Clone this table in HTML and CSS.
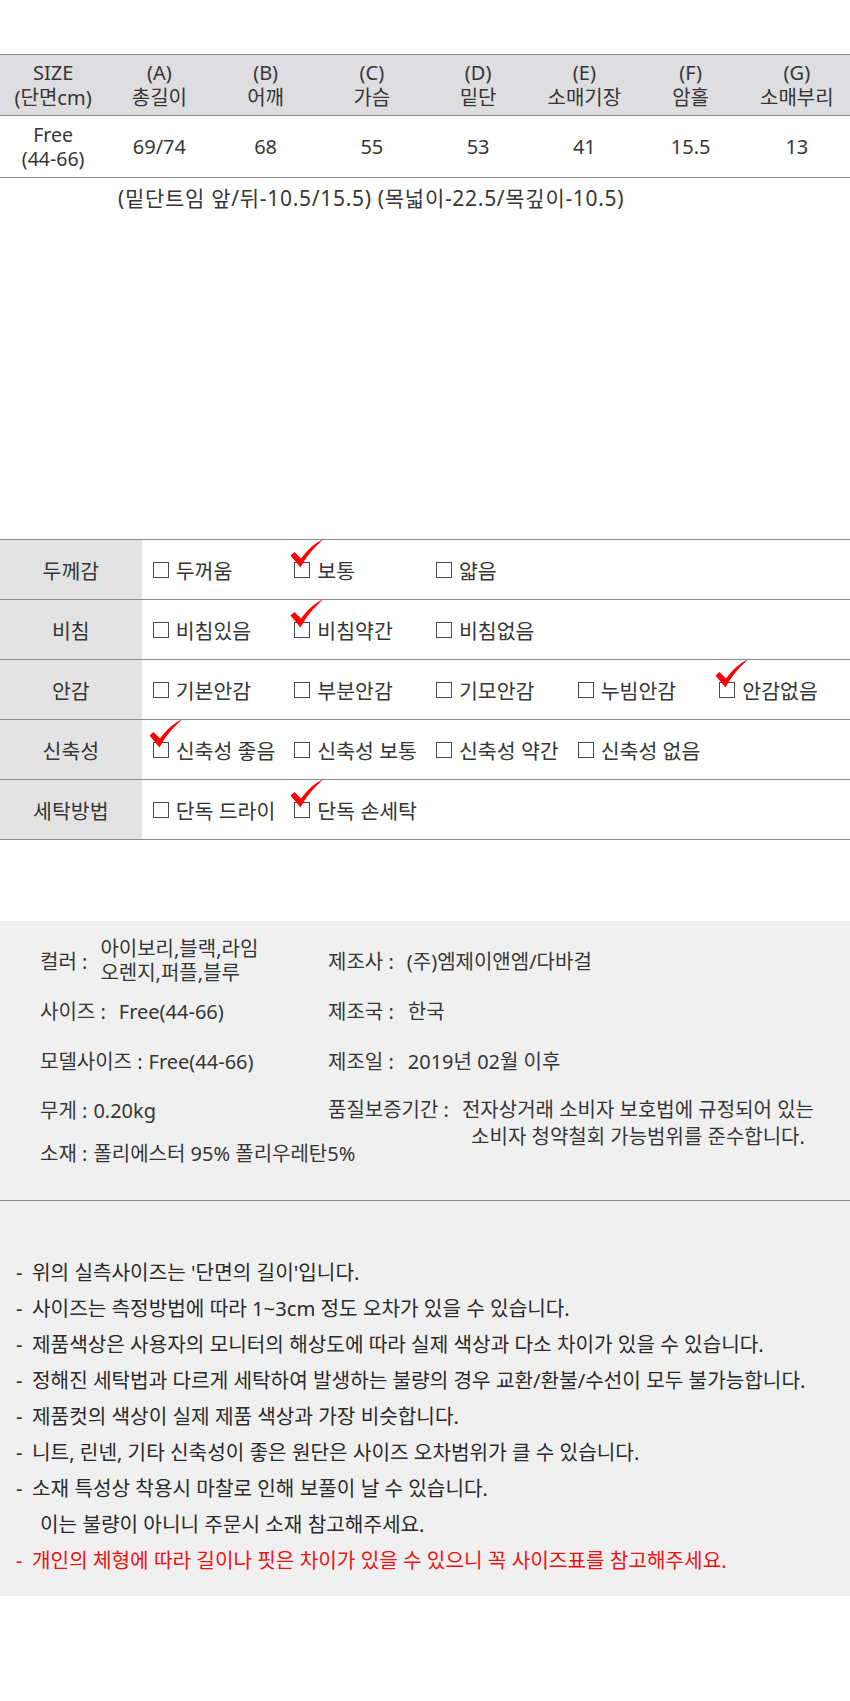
FILE: index.html
```html
<!DOCTYPE html>
<html lang="ko">
<head>
<meta charset="utf-8">
<title>사이즈 정보</title>
<link rel="stylesheet" href="styles.css">
</head>
<body>
<div class="size-table">
  <div class="st-row st-head">
    <div class="st-cell">SIZE<br>(단면cm)</div>
    <div class="st-cell">(A)<br>총길이</div>
    <div class="st-cell">(B)<br>어깨</div>
    <div class="st-cell">(C)<br>가슴</div>
    <div class="st-cell">(D)<br>밑단</div>
    <div class="st-cell">(E)<br>소매기장</div>
    <div class="st-cell">(F)<br>암홀</div>
    <div class="st-cell">(G)<br>소매부리</div>
  </div>
  <div class="st-row st-data">
    <div class="st-cell st-two">Free<br>(44-66)</div>
    <div class="st-cell">69/74</div>
    <div class="st-cell">68</div>
    <div class="st-cell">55</div>
    <div class="st-cell">53</div>
    <div class="st-cell">41</div>
    <div class="st-cell">15.5</div>
    <div class="st-cell">13</div>
  </div>
</div>
<p class="st-note">(밑단트임 앞/뒤-10.5/15.5) (목넓이-22.5/목깊이-10.5)</p>

<div class="check-table">
  <div class="ck-row">
    <div class="ck-label">두께감</div>
    <div class="ck-opt"><span class="box"></span>두꺼움</div>
    <div class="ck-opt"><span class="box"><svg class="tick" viewBox="0 0 34 30"><path d="M0.5,16.5 L4.5,13 L11,19.5 C17,11 25,4 33.5,0 C27,6 17,16 10.5,28.5 Z"/></svg></span>보통</div>
    <div class="ck-opt"><span class="box"></span>얇음</div>
  </div>
  <div class="ck-row">
    <div class="ck-label">비침</div>
    <div class="ck-opt"><span class="box"></span>비침있음</div>
    <div class="ck-opt"><span class="box"><svg class="tick" viewBox="0 0 34 30"><path d="M0.5,16.5 L4.5,13 L11,19.5 C17,11 25,4 33.5,0 C27,6 17,16 10.5,28.5 Z"/></svg></span>비침약간</div>
    <div class="ck-opt"><span class="box"></span>비침없음</div>
  </div>
  <div class="ck-row">
    <div class="ck-label">안감</div>
    <div class="ck-opt"><span class="box"></span>기본안감</div>
    <div class="ck-opt"><span class="box"></span>부분안감</div>
    <div class="ck-opt"><span class="box"></span>기모안감</div>
    <div class="ck-opt"><span class="box"></span>누빔안감</div>
    <div class="ck-opt"><span class="box"><svg class="tick" viewBox="0 0 34 30"><path d="M0.5,16.5 L4.5,13 L11,19.5 C17,11 25,4 33.5,0 C27,6 17,16 10.5,28.5 Z"/></svg></span>안감없음</div>
  </div>
  <div class="ck-row">
    <div class="ck-label">신축성</div>
    <div class="ck-opt"><span class="box"><svg class="tick" viewBox="0 0 34 30"><path d="M0.5,16.5 L4.5,13 L11,19.5 C17,11 25,4 33.5,0 C27,6 17,16 10.5,28.5 Z"/></svg></span>신축성 좋음</div>
    <div class="ck-opt"><span class="box"></span>신축성 보통</div>
    <div class="ck-opt"><span class="box"></span>신축성 약간</div>
    <div class="ck-opt"><span class="box"></span>신축성 없음</div>
  </div>
  <div class="ck-row">
    <div class="ck-label">세탁방법</div>
    <div class="ck-opt"><span class="box"></span>단독 드라이</div>
    <div class="ck-opt"><span class="box"><svg class="tick" viewBox="0 0 34 30"><path d="M0.5,16.5 L4.5,13 L11,19.5 C17,11 25,4 33.5,0 C27,6 17,16 10.5,28.5 Z"/></svg></span>단독 손세탁</div>
  </div>
</div>

<div class="info">
  <div class="info-grid">
    <div class="ii col1 row1"><span class="lbl">컬러 :</span><span class="val val-two">아이보리,블랙,라임<br>오렌지,퍼플,블루</span></div>
    <div class="ii col2 row1"><span class="lbl">제조사 :</span><span class="val">(주)엠제이앤엠/다바걸</span></div>
    <div class="ii col1 row2"><span class="lbl">사이즈 :</span><span class="val">Free(44-66)</span></div>
    <div class="ii col2 row2"><span class="lbl lbl-r">제조국 :</span><span class="val">한국</span></div>
    <div class="ii col1 row3"><span class="lbl lbl-model">모델사이즈 :</span><span class="val">Free(44-66)</span></div>
    <div class="ii col2 row3"><span class="lbl lbl-r">제조일 :</span><span class="val">2019년 02월 이후</span></div>
    <div class="ii col1 row4"><span class="lbl lbl-tight">무게 :</span><span class="val">0.20kg</span></div>
    <div class="ii col2 row4 warranty"><span class="lbl">품질보증기간 :</span><span class="val val-center">전자상거래 소비자 보호법에 규정되어 있는<br>소비자 청약철회 가능범위를 준수합니다.</span></div>
    <div class="ii col1 row5"><span class="lbl lbl-tight">소재 :</span><span class="val">폴리에스터 95% 폴리우레탄5%</span></div>
  </div>
  <div class="notes">
    <p class="nt"><span class="dash">-</span>위의 실측사이즈는 '단면의 길이'입니다.</p>
    <p class="nt"><span class="dash">-</span>사이즈는 측정방법에 따라 1~3cm 정도 오차가 있을 수 있습니다.</p>
    <p class="nt"><span class="dash">-</span>제품색상은 사용자의 모니터의 해상도에 따라 실제 색상과 다소 차이가 있을 수 있습니다.</p>
    <p class="nt"><span class="dash">-</span>정해진 세탁법과 다르게 세탁하여 발생하는 불량의 경우 교환/환불/수선이 모두 불가능합니다.</p>
    <p class="nt"><span class="dash">-</span>제품컷의 색상이 실제 제품 색상과 가장 비슷합니다.</p>
    <p class="nt"><span class="dash">-</span>니트, 린넨, 기타 신축성이 좋은 원단은 사이즈 오차범위가 클 수 있습니다.</p>
    <p class="nt"><span class="dash">-</span>소재 특성상 착용시 마찰로 인해 보풀이 날 수 있습니다.</p>
    <p class="nt nt-cont">이는 불량이 아니니 주문시 소재 참고해주세요.</p>
    <p class="nt nt-red"><span class="dash">-</span>개인의 체형에 따라 길이나 핏은 차이가 있을 수 있으니 꼭 사이즈표를 참고해주세요.</p>
  </div>
</div>
</body>
</html>
```

FILE: styles.css
```css
* { box-sizing: content-box; }
html, body { margin: 0; padding: 0; background: #fff; }
body {
  width: 850px;
  font-family: "Noto Sans", "Noto Sans CJK KR", sans-serif;
  color: #363636;
}

/* ---------- size table ---------- */
.size-table {
  margin-top: 54px;
  border-top: 1px solid #8c8c8c;
}
.st-row {
  display: grid;
  grid-template-columns: repeat(8, 1fr);
  border-bottom: 1px solid #8c8c8c;
}
.st-head { background: #dedddf; height: 60px; }
.st-data { height: 61px; }
.st-cell {
  display: flex;
  align-items: center;
  justify-content: center;
  text-align: center;
  font-size: 20px;
  line-height: 25px;
}
.st-two { font-size: 19.5px; line-height: 24px; }
.st-note {
  margin: 7px 0 0;
  padding-left: 118px;
  font-size: 21px;
  line-height: 26px;
  letter-spacing: 0.7px;
}

/* ---------- checklist ---------- */
.check-table {
  margin-top: 328px;
  border-top: 1px solid #8c8c8c;
}
.ck-row {
  display: grid;
  grid-template-columns: repeat(6, 1fr);
  height: 59px;
  border-bottom: 1px solid #8c8c8c;
}
.ck-label {
  background: #e4e3e4;
  display: flex;
  align-items: center;
  justify-content: center;
  font-size: 20.5px;
}
.ck-opt {
  display: flex;
  align-items: center;
  padding-left: 11px;
  font-size: 20.5px;
  white-space: nowrap;
}
.box {
  position: relative;
  flex: none;
  width: 14px;
  height: 14px;
  border: 1px solid #4a4a4a;
  margin-right: 7px;
  margin-top: 1px;
}
.tick {
  position: absolute;
  left: -5px;
  top: -24px;
  width: 34px;
  height: 30px;
  fill: #ff0000;
}

/* ---------- info ---------- */
.info {
  margin-top: 81px;
  background: #f0f0f0;
  padding-bottom: 18px;
}
.info-grid {
  display: grid;
  grid-template-columns: 288px 1fr;
  grid-template-rows: 50px 50px 50px 48px 38px;
  padding: 15px 0 0 40px;
  font-size: 20px;
  line-height: 23px;
}
.ii { display: flex; align-items: center; white-space: nowrap; }
.col1 { grid-column: 1; }
.col2 { grid-column: 2; }
.row1 { grid-row: 1; }
.row2 { grid-row: 2; }
.row3 { grid-row: 3; }
.row4 { grid-row: 4; }
.row5 { grid-row: 5; }
.warranty {
  grid-row: 4 / span 2;
  align-items: flex-start;
  padding-top: 12px;
}
.lbl { margin-right: 13px; }
.lbl-r { margin-right: 14px; }
.lbl-tight { margin-right: 6px; }
.lbl-model { margin-right: 6px; }
.val-two { line-height: 24px; margin-top: -1px; }
.val-center { text-align: center; line-height: 27px; margin-top: -2px; }

/* ---------- notes ---------- */
.notes {
  margin-top: 28px;
  border-top: 1px solid #8c8c8c;
  padding: 53px 0 0 16px;
}
.nt {
  margin: 0;
  font-size: 20.2px;
  line-height: 36px;
  color: #2a2a2a;
  white-space: nowrap;
}
.dash { display: inline-block; width: 16px; }
.nt-cont { padding-left: 24px; }
.nt-red { color: #ee1111; }
```
